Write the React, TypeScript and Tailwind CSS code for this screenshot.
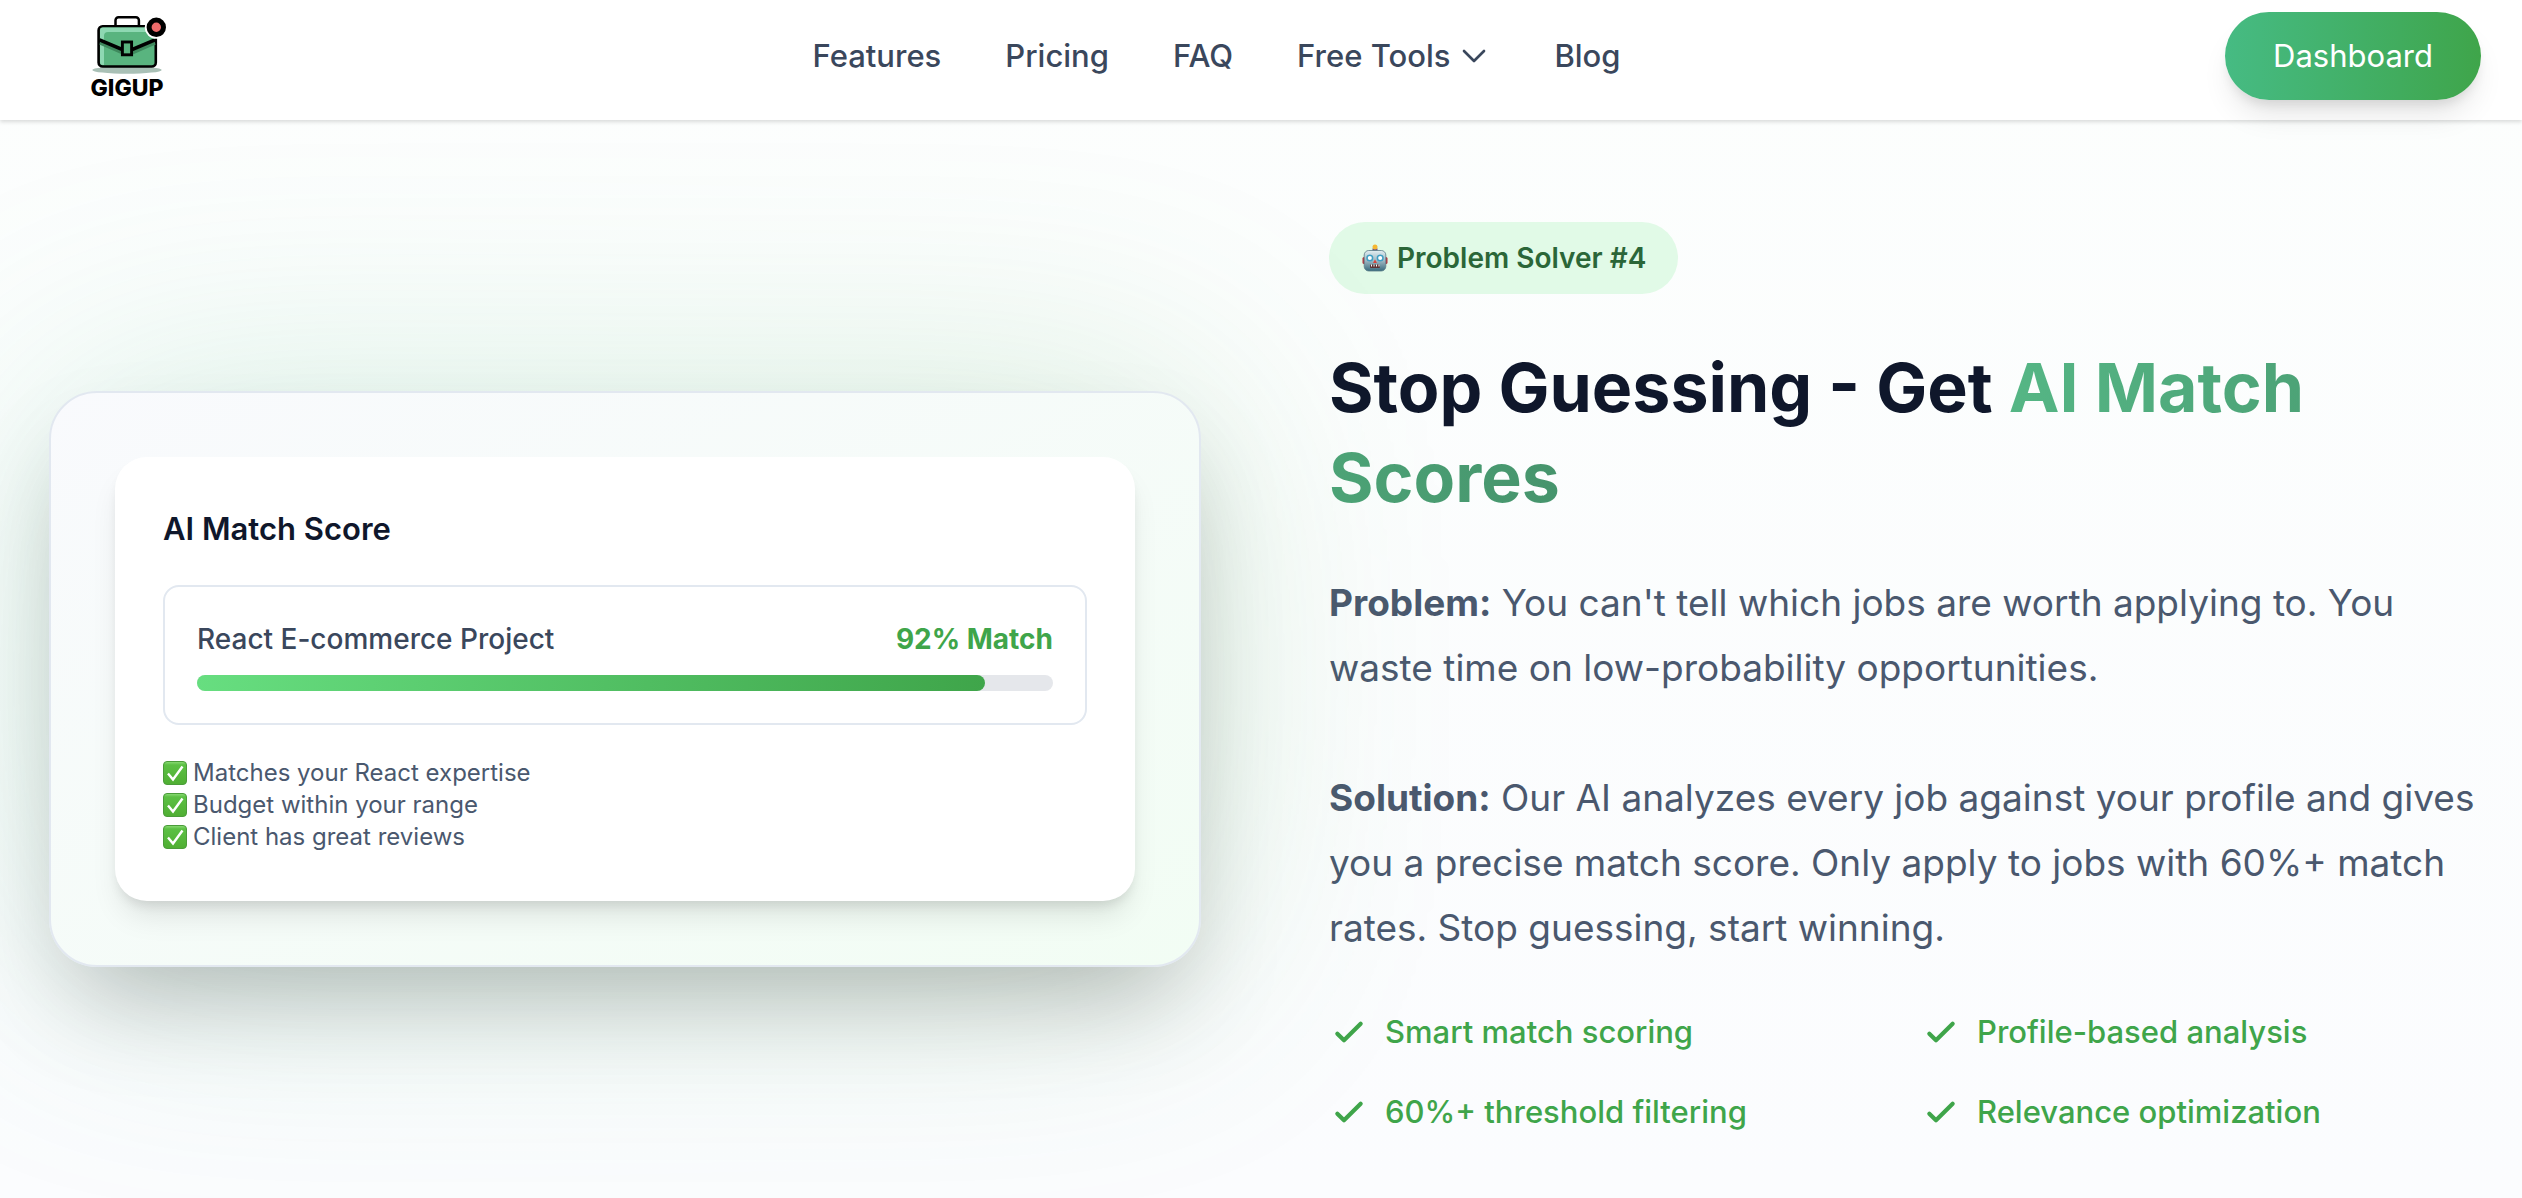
import React from 'react';

const navLinks = [
  { label: 'Features', href: '#features' },
  { label: 'Pricing', href: '#pricing' },
  { label: 'FAQ', href: '#faq' },
];

const reasons = [
  'Matches your React expertise',
  'Budget within your range',
  'Client has great reviews',
];

const benefits = [
  'Smart match scoring',
  'Profile-based analysis',
  '60%+ threshold filtering',
  'Relevance optimization',
];

function Logo() {
  return (
    <svg viewBox="0 0 96 96" className="w-24 h-24" role="img" aria-label="GigUp">
      <ellipse cx="47" cy="62" rx="34.700" ry="3.700" fill="#a9c0b6" />
      <rect x="35.500" y="9.200" width="23.400" height="14" rx="3" fill="#fff" stroke="#000" strokeWidth="2.500" />
      <rect x="18.600" y="18.300" width="57.200" height="40.200" rx="4" fill="#59b47f" stroke="#000" strokeWidth="2.600" />
      <path d="M20 22.500a3 3 0 0 1 3-3h48v4.500H28q-4 0-4 4v29h-1a3 3 0 0 1-3-3z" fill="#8ed8b2" />
      <path d="M20 35l22 9.500h11l22-9.500" fill="none" stroke="#3f8a5e" strokeWidth="3.500" />
      <path d="M19.500 31.800l22 9.300h11.500l22-9.300" fill="none" stroke="#000" strokeWidth="3.600" />
      <rect x="42.400" y="34" width="9.200" height="12.800" fill="#59b47f" stroke="#000" strokeWidth="2.900" />
      <circle cx="76.300" cy="19.300" r="11.500" fill="#fff" />
      <circle cx="76.300" cy="19.300" r="7.200" fill="#ee6b6b" stroke="#000" strokeWidth="5" />
      <text x="47" y="88" textAnchor="middle" className="font-extrabold" fontSize="23" fill="#000">
        GIGUP
      </text>
    </svg>
  );
}

function ChevronIcon() {
  return (
    <svg viewBox="0 0 24 24" className="w-8 h-8" fill="none" stroke="currentColor" strokeWidth="2" aria-hidden="true">
      <path strokeLinecap="round" strokeLinejoin="round" d="M19.500 8.250l-7.500 7.500-7.500-7.500" />
    </svg>
  );
}

function CheckIcon() {
  return (
    <svg viewBox="0 0 24 24" className="w-10 h-10" fill="none" stroke="currentColor" strokeWidth="2.500" aria-hidden="true">
      <path strokeLinecap="round" strokeLinejoin="round" d="M5 13l4 4L19 7" />
    </svg>
  );
}

function RobotIcon() {
  return (
    <svg viewBox="0 0 26 28" className="w-7 h-7" aria-hidden="true">
      <defs>
        <linearGradient id="robot-face" x1="0" y1="0" x2="0" y2="1">
          <stop offset="0" stopColor="#e3eef2" />
          <stop offset="0.500" stopColor="#9db8c2" />
          <stop offset="1" stopColor="#376b7d" />
        </linearGradient>
      </defs>
      <rect x="0.500" y="13" width="3" height="7" rx="1.500" fill="#b5303a" />
      <rect x="22.500" y="13" width="3" height="7" rx="1.500" fill="#b5303a" />
      <rect x="10.500" y="4" width="5" height="4" rx="1" fill="#6b4c86" />
      <circle cx="13" cy="3" r="2.500" fill="#f5b731" />
      <rect x="2.200" y="6.500" width="21.600" height="20.500" rx="4.500" fill="url(#robot-face)" stroke="#5b7c88" strokeWidth="0.800" />
      <circle cx="7.800" cy="14" r="2.800" fill="#fff" stroke="#3f9fc4" strokeWidth="1.500" />
      <circle cx="18.200" cy="14" r="2.800" fill="#fff" stroke="#3f9fc4" strokeWidth="1.500" />
      <path d="M13 15.500l2 3.500h-4z" fill="#d8453c" />
      <rect x="8" y="20.500" width="10" height="3.500" rx="1" fill="#5b3434" />
      <path d="M9.500 20.500v2M12 20.500v2M14.500 20.500v2M17 20.500v2" stroke="#fff" strokeWidth="1" />
    </svg>
  );
}

function CheckBadge() {
  return (
    <svg viewBox="0 0 24 24" className="w-6 h-6" aria-hidden="true">
      <defs>
        <linearGradient id="check-fill" x1="0" y1="0" x2="0" y2="1">
          <stop offset="0" stopColor="#8edc78" />
          <stop offset="0.150" stopColor="#5cc044" />
          <stop offset="1" stopColor="#4fae32" />
        </linearGradient>
      </defs>
      <rect x="0.500" y="0.500" width="23" height="23" rx="3.500" fill="url(#check-fill)" stroke="#4b9c3a" />
      <path d="M5 12.500l5 6L19.500 5.500" fill="none" stroke="#fff" strokeWidth="2.400" />
    </svg>
  );
}

function Header() {
  return (
    <header className="relative z-10 flex items-center justify-between bg-white pt-3 pb-5 pl-20 pr-[41px] shadow-[0_2px_4px_rgba(0,0,0,0.14)]">
      <a href="/" className="flex h-[88px] w-32 items-center">
        <Logo />
      </a>
      <nav className="flex items-center gap-16 text-[31px] leading-[48px] font-medium text-[#3a475c]">
        {navLinks.map((link) => (
          <a key={link.label} href={link.href}>
            {link.label}
          </a>
        ))}
        <button type="button" className="flex items-center gap-2">
          Free Tools
          <ChevronIcon />
        </button>
        <a href="#blog">Blog</a>
      </nav>
      <button
        type="button"
        className="rounded-full bg-gradient-to-r from-[#46bb83] to-[#3fa54a] px-12 py-5 text-[31px] leading-[48px] text-white shadow-[0_20px_30px_-6px_rgba(0,0,0,0.1),0_8px_12px_-4px_rgba(0,0,0,0.1)]"
      >
        Dashboard
      </button>
    </header>
  );
}

function MatchCard() {
  const score = 92;

  return (
    <div className="relative">
      <div className="absolute inset-0 rounded-[48px] bg-gradient-to-r from-[#46bb83] to-[#3fa54a] opacity-20 blur-[128px]" />
      <div className="relative rounded-[48px] border-2 border-slate-200 bg-gradient-to-br from-[#f9fafd] to-[#f2fdf4] p-16 shadow-[0_50px_100px_-24px_rgba(0,0,0,0.25)]">
        <div className="rounded-4xl bg-white p-12 shadow-[0_20px_30px_-6px_rgba(0,0,0,0.1),0_8px_12px_-4px_rgba(0,0,0,0.1)]">
          <h3 className="mb-8 text-[31px] leading-[48px] font-semibold text-slate-900">AI Match Score</h3>
          <div className="mb-8 rounded-2xl border-2 border-slate-200 p-8">
            <div className="mb-4 flex items-center justify-between text-[28px] leading-10">
              <span className="font-medium text-[#3a475c]">React E-commerce Project</span>
              <span className="font-bold text-[#3fa54a]">{score}% Match</span>
            </div>
            <div className="h-4 rounded-full bg-gray-200">
              <div
                className="h-4 rounded-full bg-gradient-to-r from-[#67de80] to-[#3fa54a]"
                style={{ width: `${score}%` }}
              />
            </div>
          </div>
          <ul className="text-2xl text-[#4a586e]">
            {reasons.map((reason) => (
              <li key={reason} className="flex items-center gap-1.5">
                <CheckBadge />
                {reason}
              </li>
            ))}
          </ul>
        </div>
      </div>
    </div>
  );
}

export default function App() {
  return (
    <div className="min-h-screen overflow-hidden bg-gradient-to-b from-[#fcfefd] to-[#fbfcfe] font-['Inter',sans-serif]">
      <Header />
      <section className="grid grid-cols-2 items-center gap-32 pt-[102px] pb-12 pl-[49px] pr-[41px]">
        <MatchCard />
        <div>
          <div className="mb-12 inline-flex items-center gap-2 rounded-full bg-[#e1fae7] px-8 py-4 text-[28px] leading-10 font-semibold text-[#2b6638]">
            <RobotIcon />
            Problem Solver #4
          </div>
          <h2 className="mb-12 text-[68px] leading-[90px] font-bold text-slate-900">
            Stop Guessing - Get{' '}
            <span className="bg-gradient-to-r from-[#55b685] to-[#46946c] bg-clip-text text-transparent">
              AI Match Scores
            </span>
          </h2>
          <p className="mb-12 text-[37px] leading-[65px] text-[#4a586e]">
            <strong>Problem:</strong> You can't tell which jobs are worth applying to. You waste time on
            low-probability opportunities.
            <br />
            <br />
            <strong>Solution:</strong> Our AI analyzes every job against your profile and gives you a precise
            match score. Only apply to jobs with 60%+ match rates. Stop guessing, start winning.
          </p>
          <ul className="grid grid-cols-2 gap-8 text-[31px] leading-[48px] font-medium text-[#3fa54a]">
            {benefits.map((benefit) => (
              <li key={benefit} className="flex items-center gap-4">
                <CheckIcon />
                {benefit}
              </li>
            ))}
          </ul>
        </div>
      </section>
    </div>
  );
}
